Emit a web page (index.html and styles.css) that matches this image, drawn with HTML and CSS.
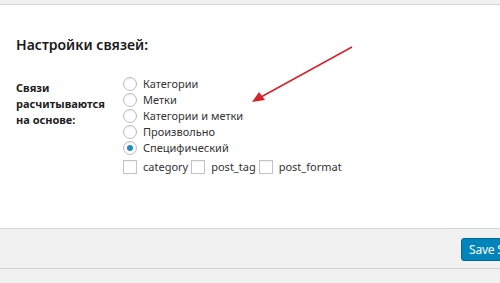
FILE: index.html
```html
<!DOCTYPE html>
<html lang="ru">
<head>
    <meta charset="UTF-8">
    <title>Настройки связей</title>
    <link rel="stylesheet" href="styles.css">
</head>
<body>
    <div class="topbar"></div>

    <div class="panel">
        <h2 class="panel-title">Настройки связей:</h2>

        <div class="form-row">
            <div class="form-label">Связи<br>расчитываются<br>на основе:</div>
            <div class="form-options">
                <label class="option"><span class="radio"></span>Категории</label>
                <label class="option"><span class="radio"></span>Метки</label>
                <label class="option"><span class="radio"></span>Категории и метки</label>
                <label class="option"><span class="radio"></span>Произвольно</label>
                <label class="option"><span class="radio checked"></span>Специфический</label>
                <div class="checks">
                    <label class="check"><span class="box"></span>category</label>
                    <label class="check"><span class="box"></span>post_tag</label>
                    <label class="check"><span class="box"></span>post_format</label>
                </div>
            </div>
        </div>

        <!-- стрелка поверх скриншота -->
        <svg class="arrow" width="110" height="62" viewBox="0 0 110 62">
            <line x1="103" y1="3" x2="12" y2="53" stroke="#d9232a" stroke-width="1.6"/>
            <polygon points="3,58 10,48 16,56" fill="#d9232a"/>
        </svg>
    </div>

    <div class="footer">
        <button class="save-button">Save Settings</button>
    </div>
</body>
</html>
```

FILE: styles.css
```css
* {
    margin: 0;
    padding: 0;
    box-sizing: border-box;
}

body {
    width: 500px;
    height: 283px;
    overflow: hidden;
    background: #f1f1f1;
    font-family: "Noto Sans", "Open Sans", sans-serif;
    color: #222;
}

.topbar {
    height: 5px;
    background: #f1f1f1;
    border-bottom: 1px solid #d4d4d4;
}

.panel {
    position: relative;
    height: 223px;
    background: #fff;
    padding: 31px 16px 0;
}

.panel-title {
    font-size: 14px;
    font-weight: 600;
    line-height: 18px;
    color: #1a1a1a;
    margin-bottom: 22px;
}

.form-row {
    display: flex;
}

.form-label {
    width: 107px;
    padding-top: 4px;
    font-size: 11px;
    font-weight: 700;
    line-height: 16px;
    color: #222;
}

.form-options {
    display: flex;
    flex-direction: column;
}

.option,
.check {
    display: flex;
    align-items: center;
    font-size: 11px;
    line-height: 16px;
    color: #333;
}

.radio {
    width: 14px;
    height: 14px;
    border: 1px solid #bdbdbd;
    border-radius: 50%;
    margin-right: 6px;
    position: relative;
    box-shadow: inset 0 1px 2px rgba(0, 0, 0, 0.08);
}

.radio.checked::after {
    content: "";
    position: absolute;
    top: 3px;
    left: 3px;
    width: 6px;
    height: 6px;
    border-radius: 50%;
    background: #1e8cbe;
}

.checks {
    display: flex;
    align-items: center;
    margin-top: 3px;
}

.box {
    width: 14px;
    height: 14px;
    border: 1px solid #c4c4c4;
    margin-right: 6px;
    box-shadow: inset 0 1px 2px rgba(0, 0, 0, 0.06);
}

.check {
    margin-right: 3px;
}

.arrow {
    position: absolute;
    left: 249px;
    top: 39px;
}

.footer {
    height: 41px;
    border-top: 1px solid #d4d4d4;
    border-bottom: 1px solid #d4d4d4;
    background: #f1f1f1;
    padding-left: 461px;
    padding-top: 8px;
    overflow: hidden;
}

.save-button {
    height: 23px;
    width: 90px;
    background: #0085ba;
    border: 1px solid #006799;
    border-radius: 3px;
    color: #fff;
    font-family: "Noto Sans", "Open Sans", sans-serif;
    font-size: 12px;
    letter-spacing: -0.2px;
    text-align: left;
    padding-left: 7px;
    white-space: nowrap;
}
```
